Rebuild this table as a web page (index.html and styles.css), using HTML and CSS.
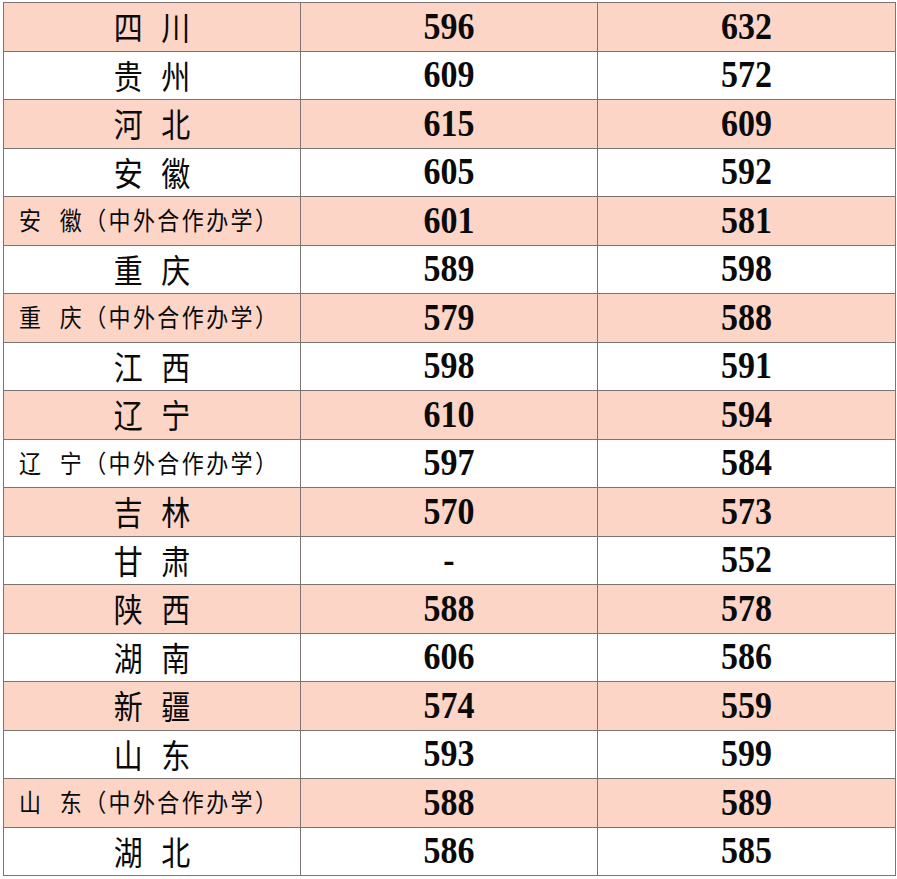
FILE: index.html
```html
<!DOCTYPE html>
<html lang="zh-CN">
<head>
<meta charset="utf-8">
<title>分数线</title>
<link rel="stylesheet" href="styles.css">
</head>
<body>
<div class="wrap">
<table class="scores">
  <colgroup><col class="c1"><col class="c2"><col class="c3"></colgroup>
  <tbody>
    <tr class="pink"><td class="name"><span class="zh">四 川</span></td><td><span class="num">596</span></td><td><span class="num">632</span></td></tr>
    <tr><td class="name"><span class="zh">贵 州</span></td><td><span class="num">609</span></td><td><span class="num">572</span></td></tr>
    <tr class="pink"><td class="name"><span class="zh">河 北</span></td><td><span class="num">615</span></td><td><span class="num">609</span></td></tr>
    <tr><td class="name"><span class="zh">安 徽</span></td><td><span class="num">605</span></td><td><span class="num">592</span></td></tr>
    <tr class="pink"><td class="name small"><span class="zh">安 徽（中外合作办学）</span></td><td><span class="num">601</span></td><td><span class="num">581</span></td></tr>
    <tr><td class="name"><span class="zh">重 庆</span></td><td><span class="num">589</span></td><td><span class="num">598</span></td></tr>
    <tr class="pink"><td class="name small"><span class="zh">重 庆（中外合作办学）</span></td><td><span class="num">579</span></td><td><span class="num">588</span></td></tr>
    <tr><td class="name"><span class="zh">江 西</span></td><td><span class="num">598</span></td><td><span class="num">591</span></td></tr>
    <tr class="pink"><td class="name"><span class="zh">辽 宁</span></td><td><span class="num">610</span></td><td><span class="num">594</span></td></tr>
    <tr><td class="name small"><span class="zh">辽 宁（中外合作办学）</span></td><td><span class="num">597</span></td><td><span class="num">584</span></td></tr>
    <tr class="pink"><td class="name"><span class="zh">吉 林</span></td><td><span class="num">570</span></td><td><span class="num">573</span></td></tr>
    <tr><td class="name"><span class="zh">甘 肃</span></td><td><span class="num">-</span></td><td><span class="num">552</span></td></tr>
    <tr class="pink"><td class="name"><span class="zh">陕 西</span></td><td><span class="num">588</span></td><td><span class="num">578</span></td></tr>
    <tr><td class="name"><span class="zh">湖 南</span></td><td><span class="num">606</span></td><td><span class="num">586</span></td></tr>
    <tr class="pink"><td class="name"><span class="zh">新 疆</span></td><td><span class="num">574</span></td><td><span class="num">559</span></td></tr>
    <tr><td class="name"><span class="zh">山 东</span></td><td><span class="num">593</span></td><td><span class="num">599</span></td></tr>
    <tr class="pink"><td class="name small"><span class="zh">山 东（中外合作办学）</span></td><td><span class="num">588</span></td><td><span class="num">589</span></td></tr>
    <tr><td class="name"><span class="zh">湖 北</span></td><td><span class="num">586</span></td><td><span class="num">585</span></td></tr>
  </tbody>
</table>
</div>
</body>
</html>
```
FILE: styles.css
```css
html, body {
  margin: 0;
  padding: 0;
  background: #ffffff;
}

.wrap {
  padding: 2px 0 0 3px;
}

.scores {
  border-collapse: collapse;
  table-layout: fixed;
  width: 892px;
}

.c1 { width: 297px; }
.c2 { width: 297px; }
.c3 { width: 298px; }

.scores td {
  border: 1px solid #7b7472;
  height: 47.5px;
  padding: 0;
  text-align: center;
  vertical-align: middle;
  color: #111;
  overflow: hidden;
  white-space: nowrap;
}

.scores tr.pink td {
  background: #fcd5c7;
}

.zh {
  display: inline-block;
  font-family: "Noto Sans CJK SC", "Noto Sans", sans-serif;
  font-size: 29px;
  font-weight: 400;
  word-spacing: 12px;
  line-height: 1;
  transform: scaleY(1.15);
  color: #0a0a0a;
}

.name.small {
  text-align: left;
  padding-left: 15px;
}

.name.small .zh {
  font-size: 22px;
  letter-spacing: 2.4px;
  word-spacing: 9px;
  transform: scaleY(1.12);
  text-spacing-trim: space-all;
}

.num {
  display: inline-block;
  font-family: "Liberation Serif", "Times New Roman", serif;
  font-weight: bold;
  font-size: 34px;
  line-height: 1;
  transform: scaleY(1.12);
  color: #0a0a0a;
}
```
